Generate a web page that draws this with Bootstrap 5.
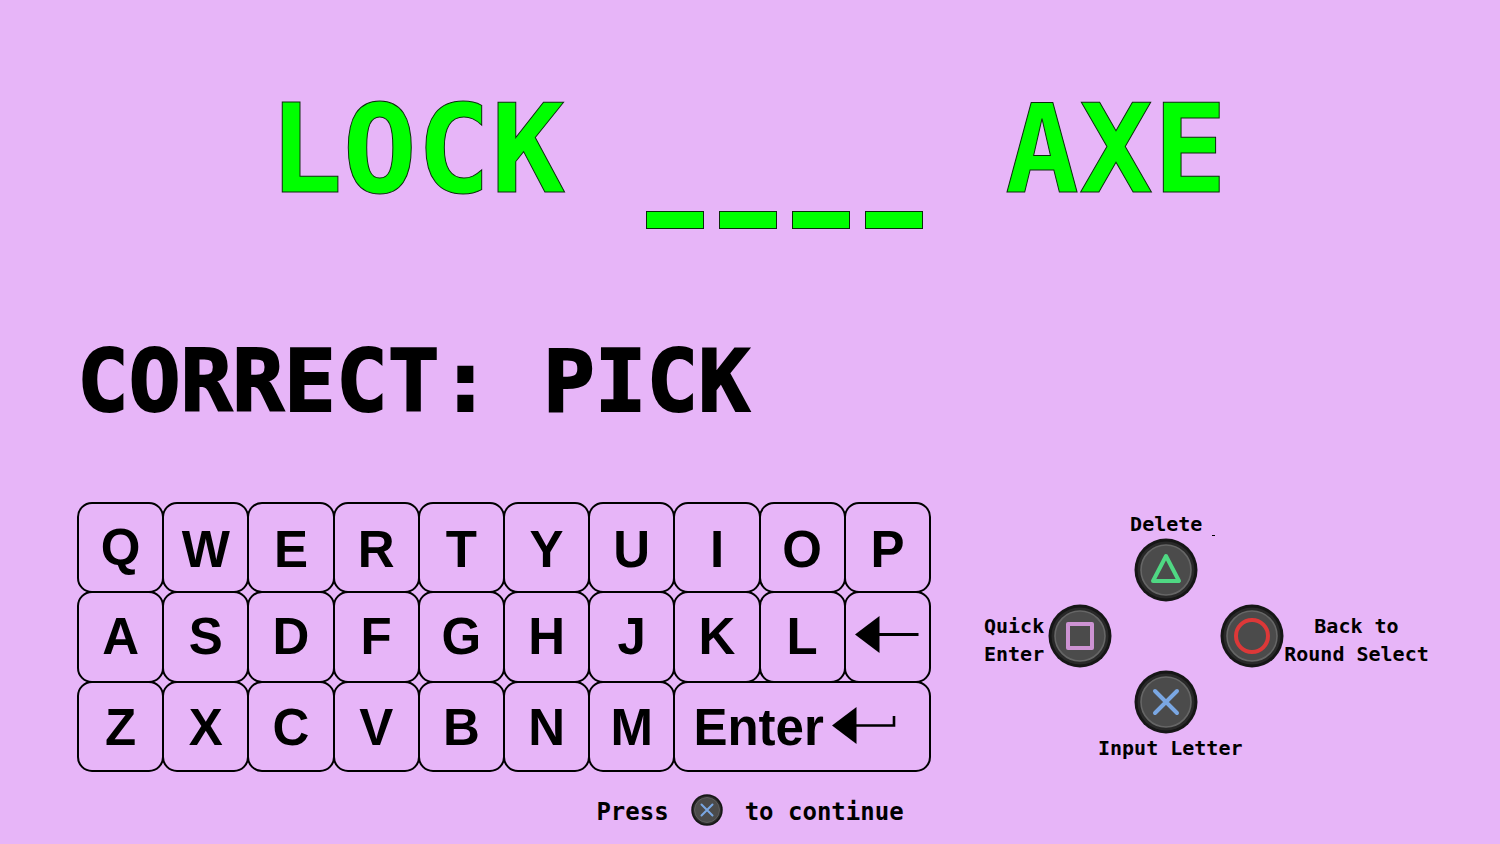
<!DOCTYPE html>
<html lang="en">
<head>
<meta charset="utf-8">
<meta name="viewport" content="width=device-width, initial-scale=1">
<title>Word link puzzle</title>
<link href="https://cdn.jsdelivr.net/npm/bootstrap@5.3.0/dist/css/bootstrap.min.css" rel="stylesheet">
<style>
  body { background: #e7b5f8; color: #000; font-family: "DejaVu Sans Mono", monospace; font-weight: 700; }
  .puzzle { font-size: 123px; line-height: 142px; font-weight: 700; color: #0f0; padding: 79px 12px 0 0; -webkit-text-stroke: 1px #0b2a0b; white-space: nowrap; }
  .blank { display: inline-block; width: 58px; height: 18px; margin: 0 8px 0 7px; background: #0f0; border: 1px solid #0b2a0b; vertical-align: -37px; }
  .answer { font-size: 86px; line-height: 100px; font-weight: 700; margin-top: 102px; -webkit-text-stroke: 2px #000; }
  .board { padding: 0 69px 0 77px; }
  .controls { display: grid; grid-template-columns: minmax(0, 854fr) minmax(0, 447fr); gap: 53px; margin-top: 71px; }
  .keyboard { display: grid; grid-template-columns: repeat(10, minmax(0, 1fr)); grid-template-rows: repeat(3, 1fr); height: 270px; padding: 1px; }
  .key { margin: -1px; padding: 0; border: 2px solid #000; border-radius: 15px; background: none; color: #000; font: 700 51px/60px "Liberation Sans", Arial, sans-serif; display: flex; align-items: center; justify-content: center; min-width: 0; }
  .key.wide { grid-column: span 3; justify-content: flex-start; padding-left: 18px; gap: 8px; }
  .pad { display: grid; grid-template-columns: auto 108px auto; justify-content: start; align-content: start; row-gap: 2px; font-size: 20px; line-height: 28px; white-space: nowrap; padding-top: 8px; }
  .pad-mid { grid-column: 2; }
  .pad-left { grid-column: 1; }
  .pad-right { grid-column: 3; }
  .round { border: 0; padding: 0; background: none; display: block; flex: none; }
  .round svg { display: block; width: 64px; height: 64px; }
  .round.mini svg { width: 32px; height: 32px; }
  .tick::after { content: ""; position: absolute; left: 100%; bottom: 2px; width: 3px; height: 1px; margin-left: 10px; background: #000; }
  .prompt { font-size: 24px; line-height: 32px; margin-top: 20px; gap: 22px; }
</style>
</head>
<body>
<svg width="0" height="0" class="position-absolute" aria-hidden="true">
  <defs>
    <g id="face">
      <circle cx="32" cy="32" r="31.5" fill="#161616"/>
      <circle cx="32" cy="32" r="28.5" fill="#292929"/>
      <circle cx="32" cy="32" r="25" fill="#4b4b4b" stroke="#666" stroke-width="1.6"/>
    </g>
    <g id="cross">
      <use href="#face"/>
      <path d="M21 21 43 43M43 21 21 43" stroke="#7aa7e3" stroke-width="4" stroke-linecap="round"/>
    </g>
  </defs>
</svg>
<main class="board">
  <h1 class="puzzle text-center mb-0 d-flex justify-content-center">
    <span>LOCK&nbsp;<span class="blank"></span><span class="blank"></span><span class="blank"></span><span class="blank"></span>&nbsp;AXE</span>
  </h1>
  <h2 class="answer mb-0">CORRECT: PICK</h2>

  <div class="controls">
    <div class="keyboard">
      <button class="key">Q</button><button class="key pt-1">W</button><button class="key pt-1">E</button><button class="key pt-1">R</button><button class="key pt-1">T</button><button class="key pt-1">Y</button><button class="key pt-1">U</button><button class="key pt-1">I</button><button class="key pt-1">O</button><button class="key pt-1">P</button>
      <button class="key">A</button><button class="key">S</button><button class="key">D</button><button class="key">F</button><button class="key">G</button><button class="key">H</button><button class="key">J</button><button class="key">K</button><button class="key">L</button>
      <button class="key pb-1" aria-label="Backspace"><svg width="64" height="38" viewBox="0 0 64 38"><path d="M0 18.500 24.500 0V37Z"/><path d="M24 18.500H63.500" stroke="#000" stroke-width="3"/></svg></button>
      <button class="key pt-1">Z</button><button class="key pt-1">X</button><button class="key pt-1">C</button><button class="key pt-1">V</button><button class="key pt-1">B</button><button class="key pt-1">N</button><button class="key pt-1">M</button>
      <button class="key wide"><span class="pt-1">Enter</span><svg width="64" height="38" viewBox="0 0 64 38"><path d="M0 18.500 24.500 0V37Z"/><path d="M24 18.500H62V9" fill="none" stroke="#000" stroke-width="2.600"/></svg></button>
    </div>

    <div class="pad">
      <div class="pad-mid d-flex flex-column align-items-center">
        <label for="b-del" class="position-relative tick">Delete</label>
        <button id="b-del" class="round"><svg viewBox="0 0 64 64"><use href="#face"/><path d="M32 18 45 43H19Z" fill="none" stroke="#4fd883" stroke-width="4" stroke-linejoin="round"/></svg></button>
      </div>
      <div class="pad-left d-flex align-items-center gap-1">
        <label for="b-quick" class="pt-2">Quick<br>Enter</label>
        <button id="b-quick" class="round"><svg viewBox="0 0 64 64"><use href="#face"/><rect x="20" y="20" width="24" height="24" fill="none" stroke="#cd93d3" stroke-width="4" stroke-linejoin="round"/></svg></button>
      </div>
      <div class="pad-right d-flex align-items-center">
        <button id="b-back" class="round"><svg viewBox="0 0 64 64"><use href="#face"/><circle cx="32" cy="32" r="16" fill="none" stroke="#dd3838" stroke-width="4"/></svg></button>
        <label for="b-back" class="text-center pt-2">Back to<br>Round Select</label>
      </div>
      <div class="pad-mid d-flex flex-column align-items-center">
        <button id="b-in" class="round"><svg viewBox="0 0 64 64"><use href="#cross"/></svg></button>
        <label for="b-in" class="ps-2">Input Letter</label>
      </div>
    </div>
  </div>
</main>
<div class="prompt d-flex justify-content-center align-items-center">
  <span class="pt-1">Press</span>
  <button class="round mini" aria-label="Continue"><svg viewBox="0 0 64 64"><use href="#cross"/></svg></button>
  <span class="pt-1">to continue</span>
</div>
<script src="https://cdn.jsdelivr.net/npm/bootstrap@5.3.0/dist/js/bootstrap.bundle.min.js"></script>
</body>
</html>
